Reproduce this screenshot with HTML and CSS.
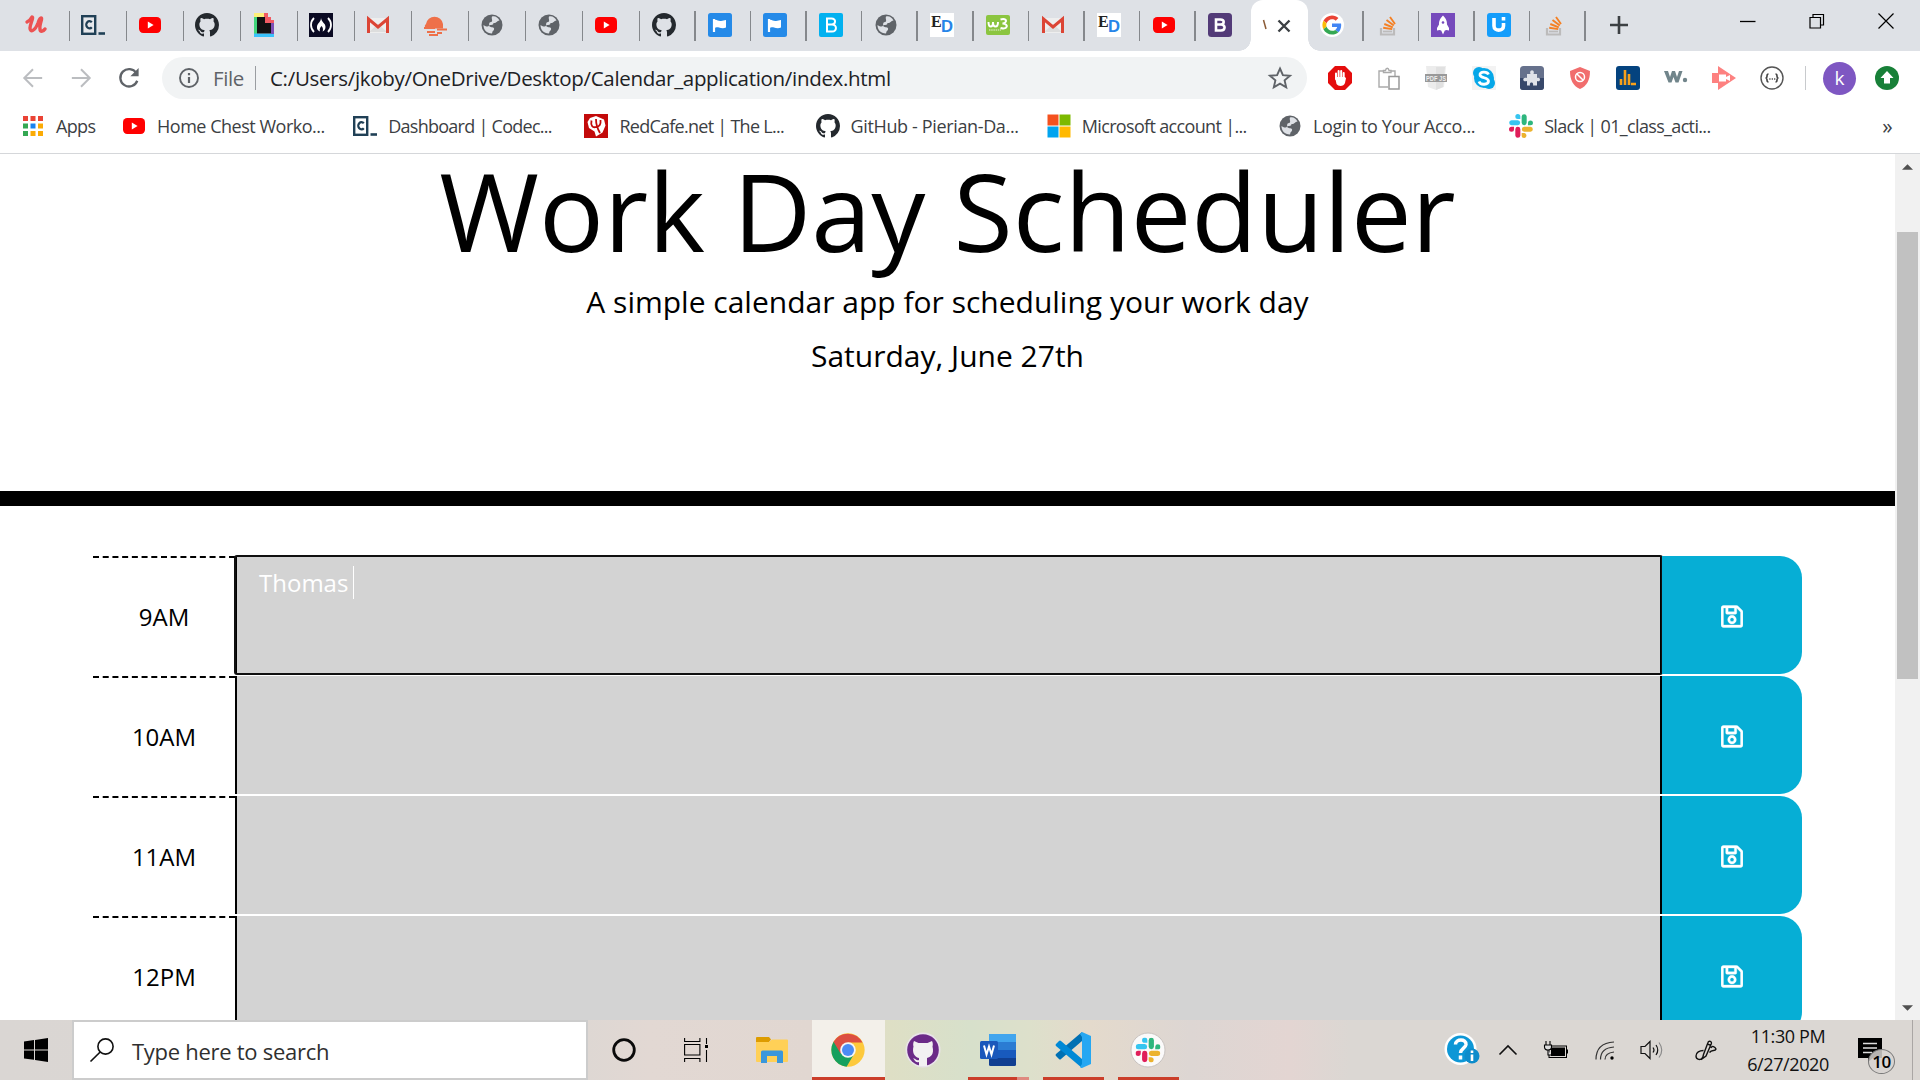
FILE: index.html
```html
<!DOCTYPE html>
<html lang="en">
<head>
<meta charset="utf-8">
<title>Work Day Scheduler</title>
<link rel="stylesheet" href="styles.css">
</head>
<body>
<svg class="defs" width="0" height="0">
  <symbol id="udemy" viewBox="0 0 24 24"><path d="M3 9c2-1 4-3 5-5 2 0-2 7-2 11 0 5 5 3 8-5 1-3 2-5 3-5 2 0-2 7-1 11 0 3 3 3 5 0" fill="none" stroke="#ec5252" stroke-width="3.4" stroke-linecap="round" stroke-linejoin="round"/></symbol>
  <symbol id="codec" viewBox="0 0 24 24"><rect x="1.2" y="3.2" width="13" height="17.6" fill="#fff" fill-opacity=".25" stroke="#204056" stroke-width="2.4"/><path d="M10.800 9.300A3.200 3.600 0 1 0 10.800 14.200" fill="none" stroke="#204056" stroke-width="2.200"/><path d="M17.500 20.500h6.500" stroke="#204056" stroke-width="2.600"/></symbol>
  <symbol id="yt" viewBox="0 0 24 24"><rect x="1" y="4" width="22" height="16" rx="4.200" fill="#f00"/><path d="M9.800 8.600v6.800l5.800-3.400z" fill="#fff"/></symbol>
  <symbol id="github" viewBox="0 0 16 16"><path fill="#24292e" d="M8 0C3.58 0 0 3.58 0 8c0 3.540 2.290 6.530 5.470 7.590.4.070.55-.17.55-.38 0-.19-.01-.82-.01-1.490-2.010.37-2.530-.49-2.690-.94-.09-.23-.48-.94-.82-1.130-.28-.15-.68-.52-.01-.53.63-.01 1.080.58 1.230.82.72 1.210 1.870.87 2.330.66.070-.52.28-.87.51-1.070-1.780-.2-3.640-.89-3.640-3.950 0-.87.31-1.590.82-2.150-.08-.2-.36-1.020.08-2.120 0 0 .67-.21 2.200.82.64-.18 1.320-.27 2-.27s1.360.09 2 .27c1.530-1.040 2.200-.82 2.200-.82.44 1.100.16 1.920.08 2.120.51.56.82 1.270.82 2.150 0 3.070-1.870 3.750-3.650 3.950.29.25.54.73.54 1.480 0 1.070-.01 1.930-.01 2.200 0 .21.15.46.55.38A8.013 8.013 0 0 0 16 8c0-4.420-3.580-8-8-8z"/></symbol>
  <symbol id="giphy" viewBox="0 0 24 24"><path d="M2 0h10v4H2z" fill="#fff07a"/><path d="M2 4h3v18H2z" fill="#42d67b"/><path d="M2 20.500h20V24H2z" fill="#39c2fb"/><path d="M19 9h3v12h-3z" fill="#7e4fb5"/><path d="M12 0h4v4h3v3h3v3H12z" fill="#f15b63"/><path d="M5 4h8v6h6v10.500H5z" fill="#111"/></symbol>
  <symbol id="fcc" viewBox="0 0 24 24"><path d="M0 0h24v24H0z" fill="#0a0a23"/><path d="M5 5c-4 4-4 10 0 14M19 5c4 4 4 10 0 14" stroke="#fff" stroke-width="1.800" fill="none"/><path d="M12 5c1 5 4.500 5 4.500 9 0 2.500-1.500 4-3 4.500 1-1.500.5-4-1-5.500-1 1-2.500 3-1.500 5.500-2-.5-3.500-2.500-3-5C8.500 10 12 9 12 5z" fill="#fff"/></symbol>
  <symbol id="gmail" viewBox="0 0 24 24"><path d="M2 5h20v15H2z" fill="#eee"/><path d="M3 19l9-8 9 8z" fill="#ddd"/><path d="M2.500 20V6l9.500 8 9.500-8v14" fill="none" stroke="#dc4535" stroke-width="3"/></symbol>
  <symbol id="sun" viewBox="0 0 24 24"><path d="M3 15.500C1 13 2 12 3 11a8.600 8.600 0 0 1 17 0v4.500z" fill="#ee7049"/><path d="M1 15h11M14 16.500h10M4 19h8M14 20h5M6 22h9" stroke="#ee7049" stroke-width="1.800"/></symbol>
  <symbol id="globe" viewBox="0 0 24 24"><circle cx="12" cy="12" r="10.500" fill="#5f6368"/><path d="M12 3.500c3-1 6 1 7.500 4-3 .5-3 3-6 2.500 0 2-2 2-4 2-1 2 1.500 2 3.500 2.500s1 3-.5 4l-.5 2c-5.500 0-8.500-4-8.500-8.500 3 2 5 2 5.500.5s-.5-3 2-3.500 0-3.500 1-5.500z" fill="#dee1e6"/></symbol>
  <symbol id="flag" viewBox="0 0 24 24"><rect width="24" height="24" rx="2.500" fill="#258ae8"/><path d="M6 6v13" stroke="#fff" stroke-width="2.200"/><path d="M6 7c3-1 4 1.500 7 1 2 0 3-1 5-1v7.500c-3 1.500-5 .5-7 0-2-.5-3 0-5 .5z" fill="#fff"/></symbol>
  <symbol id="bsb" viewBox="0 0 24 24"><rect width="24" height="24" rx="2" fill="#02b1f0"/><path d="M8 5.500h4.500c5 0 4.500 6 0 6H8h5c5.500 0 5 7 0 7H8z" fill="none" stroke="#fff" stroke-width="2"/></symbol>
  <symbol id="ed" viewBox="0 0 24 24"><path d="M0 0h24v24H0z" fill="#fff"/><text x="1" y="14" font-family="Liberation Serif,serif" font-weight="700" font-size="16" fill="#222">E</text><text x="11" y="19" font-family="Liberation Sans,sans-serif" font-weight="700" font-size="16" fill="#2684e8" textLength="12" lengthAdjust="spacingAndGlyphs">D</text></symbol>
  <symbol id="w3" viewBox="0 0 24 24"><rect y="2" width="24" height="20" rx="2" fill="#8bc540"/><path d="M2.500 9c0 6 4.500 6 4.500 0 0 6 5 6 5 0M14.500 6.500c7-2 7 3.500 2 4 7 .5 5 6.500-2 4.500" fill="none" stroke="#fff" stroke-width="2"/><path d="M3 17h12" stroke="#fff" stroke-dasharray="1.500 .7" opacity=".8"/></symbol>
  <symbol id="bs" viewBox="0 0 24 24"><rect width="24" height="24" rx="3.500" fill="#533b78"/><path d="M8 6.500h4.500c4.500 0 4 5 0 5H8h5c5 0 4.500 6 0 6H8z" fill="none" stroke="#fff" stroke-width="2.600"/></symbol>
  <symbol id="google" viewBox="-6 -6 60 60"><circle cx="24" cy="24" r="30" fill="#fff"/><path fill="#ea4335" d="M24 9.500c3.540 0 6.710 1.220 9.210 3.600l6.850-6.850C35.900 2.380 30.470 0 24 0 14.620 0 6.510 5.380 2.560 13.220l7.980 6.190C12.430 13.720 17.740 9.500 24 9.500z"/><path fill="#4285f4" d="M46.980 24.550c0-1.570-.15-3.090-.38-4.550H24v9.020h12.940c-.58 2.960-2.260 5.480-4.780 7.180l7.730 6c4.510-4.180 7.090-10.360 7.090-17.650z"/><path fill="#fbbc05" d="M10.530 28.590c-.48-1.450-.76-2.990-.76-4.590s.27-3.140.76-4.590l-7.980-6.190C.92 16.460 0 20.120 0 24c0 3.880.92 7.540 2.560 10.780l7.970-6.190z"/><path fill="#34a853" d="M24 48c6.480 0 11.930-2.130 15.890-5.810l-7.730-6c-2.150 1.450-4.920 2.300-8.160 2.300-6.260 0-11.570-4.220-13.470-9.910l-7.980 6.190C6.510 42.620 14.620 48 24 48z"/></symbol>
  <symbol id="so" viewBox="0 0 24 24"><path d="M5 15v6.500h13V15" fill="none" stroke="#bcbbbb" stroke-width="2.200"/><path d="M7 18.500h9" stroke="#bcbbbb" stroke-width="1.700"/><path d="M7.200 14.800l9 1.300M8.300 11l8.500 3.400M10.500 7l7.300 5.400M14 4l5 7" stroke="#f48024" stroke-width="1.900"/></symbol>
  <symbol id="rocket" viewBox="0 0 24 24"><path d="M0 0h24v24H0z" fill="#764abc"/><path d="M12 2.500c4 4 4 7 4 9l2 3.500v2.500q-3-1-4 0h-4q-1-1-4 0V15l2-3.500c0-2 0-5 4-9zM10.200 17.500h3.600L12 21.500z" fill="#fff"/><circle cx="12" cy="9.500" r="1.300" fill="#764abc"/></symbol>
  <symbol id="ui" viewBox="0 0 24 24"><rect width="24" height="24" rx="3" fill="#149dfb"/><path d="M7 5v8c0 5.500 9.500 5.500 9.500 0v-3" fill="none" stroke="#fff" stroke-width="3.600"/><path d="M14.700 4h3.600v3.500h-3.600z" fill="#fff"/></symbol>
  <symbol id="slack" viewBox="0 0 24 24"><path fill="#e01e5a" d="M5.042 15.165a2.528 2.528 0 0 1-2.520 2.523A2.528 2.528 0 0 1 0 15.165a2.527 2.527 0 0 1 2.522-2.520h2.520zM6.313 15.165a2.527 2.527 0 0 1 5.042 0v6.313a2.528 2.528 0 0 1-5.042 0z"/><path fill="#36c5f0" d="M8.834 5.042a2.528 2.528 0 0 1-2.521-2.520A2.528 2.528 0 0 1 8.834 0a2.528 2.528 0 0 1 2.521 2.522v2.520zM8.834 6.313a2.528 2.528 0 0 1 0 5.042H2.522a2.528 2.528 0 0 1 0-5.042z"/><path fill="#2eb67d" d="M18.956 8.834a2.528 2.528 0 0 1 5.044 0 2.528 2.528 0 0 1-2.522 2.521h-2.522zM17.688 8.834a2.528 2.528 0 0 1-5.043 0V2.522a2.528 2.528 0 0 1 5.043 0z"/><path fill="#ecb22e" d="M15.165 18.956a2.528 2.528 0 0 1 0 5.044 2.527 2.527 0 0 1-2.520-2.522v-2.522zM15.165 17.688a2.527 2.527 0 0 1 0-5.043h6.313a2.528 2.528 0 0 1 0 5.043z"/></symbol>
  <symbol id="save" viewBox="0 0 448 512"><path fill="#fff" stroke="#fff" stroke-width="8" d="M433.941 129.941l-83.882-83.882A48 48 0 0 0 316.118 32H48C21.490 32 0 53.490 0 80v352c0 26.510 21.490 48 48 48h352c26.510 0 48-21.490 48-48V163.882a48 48 0 0 0-14.059-33.941zM272 80v80H144V80h128zm122 352H54a6 6 0 0 1-6-6V86a6 6 0 0 1 6-6h42v104c0 13.255 10.745 24 24 24h176c13.255 0 24-10.745 24-24V83.882l78.243 78.243a6 6 0 0 1 1.757 4.243V426a6 6 0 0 1-6 6zM224 232c-48.523 0-88 39.477-88 88s39.477 88 88 88 88-39.477 88-88-39.477-88-88-88zm0 128c-22.056 0-40-17.944-40-40s17.944-40 40-40 40 17.944 40 40-17.944 40-40 40z"/></symbol>
</svg>

<div class="tabs">
  <div class="tab wide"><svg><use href="#udemy"/></svg></div>
  <div class="tab wide"><svg><use href="#codec"/></svg></div>
  <div class="tab wide"><svg><use href="#yt"/></svg></div>
  <div class="tab wide"><svg><use href="#github"/></svg></div>
  <div class="tab wide"><svg><use href="#giphy"/></svg></div>
  <div class="tab wide"><svg><use href="#fcc"/></svg></div>
  <div class="tab wide"><svg><use href="#gmail"/></svg></div>
  <div class="tab wide"><svg><use href="#sun"/></svg></div>
  <div class="tab wide"><svg><use href="#globe"/></svg></div>
  <div class="tab wide"><svg><use href="#globe"/></svg></div>
  <div class="tab wide"><svg><use href="#yt"/></svg></div>
  <div class="tab"><svg><use href="#github"/></svg></div>
  <div class="tab"><svg><use href="#flag"/></svg></div>
  <div class="tab"><svg><use href="#flag"/></svg></div>
  <div class="tab"><svg><use href="#bsb"/></svg></div>
  <div class="tab"><svg><use href="#globe"/></svg></div>
  <div class="tab"><svg><use href="#ed"/></svg></div>
  <div class="tab"><svg><use href="#w3"/></svg></div>
  <div class="tab"><svg><use href="#gmail"/></svg></div>
  <div class="tab"><svg><use href="#ed"/></svg></div>
  <div class="tab"><svg><use href="#yt"/></svg></div>
  <div class="tab last"><svg><use href="#bs"/></svg></div>
  <div class="tab active"><svg class="sliver" viewBox="0 0 4 14"><path d="M.5 1l2.500 9" stroke="#8a5a35" stroke-width="1.500"/></svg><svg class="close" viewBox="0 0 14 14"><path d="M1.500 1.500l11 11m0-11l-11 11" stroke="#3c4043" stroke-width="2.400"/></svg></div>
  <div class="tab"><svg><use href="#google"/></svg></div>
  <div class="tab"><svg><use href="#so"/></svg></div>
  <div class="tab"><svg><use href="#rocket"/></svg></div>
  <div class="tab"><svg><use href="#ui"/></svg></div>
  <div class="tab"><svg><use href="#so"/></svg></div>
  <svg class="newtab" viewBox="0 0 18 18"><path d="M9 0v18M0 9h18" stroke="#3c4043" stroke-width="2.600"/></svg>
  <div class="window">
    <svg viewBox="0 0 16 16"><path d="M0 8.500h15.500" stroke="#000" stroke-width="1.300"/></svg>
    <svg viewBox="0 0 16 16"><path d="M1 4.500h10.500V15H1zM4 4.500v-3h10.500V12h-3" fill="none" stroke="#000" stroke-width="1.200"/></svg>
    <svg viewBox="0 0 16 16"><path d="M.5.5l15 15m0-15l-15 15" stroke="#000" stroke-width="1.200"/></svg>
  </div>
</div>

<div class="toolbar">
  <div class="nav">
    <svg viewBox="0 0 24 24"><path d="M22 12H3m9-9.500L2.500 12l9.500 9.500" fill="none" stroke="#bbbdc0" stroke-width="2.200"/></svg>
    <svg viewBox="0 0 24 24"><path d="M2 12h19m-9-9.500l9.500 9.500-9.500 9.500" fill="none" stroke="#bbbdc0" stroke-width="2.200"/></svg>
    <svg viewBox="0 0 24 24"><path d="M20 6.500A9.500 9.500 0 1 0 21 15" fill="none" stroke="#5f6368" stroke-width="2.500"/><path d="M22.500 1v9h-9z" fill="#5f6368"/></svg>
  </div>
  <div class="omnibox">
    <svg class="info" viewBox="0 0 20 20"><circle cx="10" cy="10" r="9" fill="none" stroke="#5f6368" stroke-width="1.900"/><path d="M10 9v6M10 5v2.200" stroke="#5f6368" stroke-width="2.200"/></svg>
    <span class="scheme">File</span>
    <span class="url">C:/Users/jkoby/OneDrive/Desktop/Calendar_application/index.html</span>
    <svg class="star" viewBox="0 0 24 24"><path d="M12 2.500l2.900 6.600 7.100.6-5.400 4.700 1.600 7-6.200-3.700-6.200 3.700 1.600-7L2 9.700l7.100-.6z" fill="none" stroke="#5f6368" stroke-width="1.900"/></svg>
  </div>
  <div class="ext">
    <svg viewBox="0 0 24 24"><path d="M7 0h10l7 7v10l-7 7H7l-7-7V7z" fill="#e40d0d"/><path d="M8 13V7.500M10.600 12V5M13.200 12V5M15.700 13V7" stroke="#fff" stroke-width="2" stroke-linecap="round"/><path d="M7 11h9.700l1.300 1-1 5c-1 3.500-6.500 4-8.500 1z" fill="#fff"/></svg>
    <svg viewBox="0 0 24 24"><path d="M12 21H3V5h4.500M15 5h4v5M7.500 6.500h7.500V4.500h-2c-.5-3-3-3-3.500 0h-2z" fill="none" stroke="#aaa" stroke-width="1.400"/><path d="M13 10.500h10V23H13z" fill="#fff" stroke="#999" stroke-width="1.500"/></svg>
    <svg viewBox="0 0 24 24"><path d="M2 0h20l-2 21-8 3-8-3z" fill="#ececec"/><path d="M12 1h9l-2 20-7 3z" fill="#e1e1e1"/><rect x="1" y="8" width="22" height="8" fill="#999"/><text x="2" y="15" font-family="Liberation Sans,sans-serif" font-size="7.500" font-weight="700" fill="#eee" textLength="20" lengthAdjust="spacingAndGlyphs">PDF JS</text></svg>
    <svg viewBox="0 0 24 24"><path d="M0 0h24v24H0z" fill="#f3f3f3"/><circle cx="12" cy="12" r="10" fill="#06a7e8"/><circle cx="7" cy="7" r="6" fill="#06a7e8"/><circle cx="17" cy="17" r="6" fill="#06a7e8"/><path d="M16.500 8.500C15 5 7.500 5.500 8 9c.5 3.500 8.500 2 8.500 6s-8 4.500-9.500.5" fill="none" stroke="#fff" stroke-width="2.800"/></svg>
    <svg viewBox="0 0 24 24"><rect width="24" height="24" rx="3.500" fill="#66718c"/><path d="M0 12h24v9a3 3 0 0 1-3 3H3a3 3 0 0 1-3-3z" fill="#38486a"/><path d="M7 8h3.500c-2-5 5-5 3 0H17v4c4-2 4 5 0 3v4.500h-4c1-4-4-4-3 0H7V15c-5 2-5-5 0-3z" fill="#e0e2e8"/></svg>
    <svg viewBox="0 0 24 24"><path d="M12 1l10 4c0 9-3 15-10 18C5 20 2 14 2 5z" fill="#f16d6d"/><circle cx="12" cy="11" r="4.500" fill="none" stroke="#fff" stroke-width="1.500"/><path d="M9 8l6 6" stroke="#fff" stroke-width="1.500"/></svg>
    <svg viewBox="0 0 24 24"><rect width="24" height="24" rx="3" fill="#04437f"/><path d="M5 19v-6M9 19V4M13 19V8M15 18h5" stroke="#f9a11b" stroke-width="2.600"/></svg>
    <svg viewBox="0 0 24 24"><path d="M0 5h4l2 6 2-6h3l2 6 2-6h3.500l-4 11.500h-3L9.500 11l-2 5.500h-3z" fill="#71858b"/><circle cx="21" cy="14" r="2.200" fill="#71858b"/></svg>
    <svg viewBox="0 0 24 24"><path d="M0 7h6v10H0zM6 0l18 12L6 24z" fill="#fd8180"/><path d="M7 8.500h7V11l4-2v6l-4-2v2.500H7z" fill="#fff"/></svg>
    <svg viewBox="0 0 24 24"><circle cx="12" cy="12" r="11" fill="none" stroke="#555" stroke-width="1.400"/><path d="M8.500 8c-3 0 0 4-3 4 3 0 0 4 3 4M15.500 8c3 0 0 4 3 4-3 0 0 4-3 4" fill="none" stroke="#444" stroke-width="1.600"/><path d="M9.300 13h6" stroke="#444" stroke-width="1.300" stroke-dasharray="1.200 1.200"/></svg>
  </div>
  <div class="avatar">k</div>
  <svg class="update" viewBox="0 0 24 24"><circle cx="12" cy="12" r="12" fill="#188038"/><path d="M12 5l6.500 7H15v5.500H9V12H5.500z" fill="#fff"/></svg>
</div>

<div class="bookmarks">
  <div class="bm apps"><svg viewBox="0 0 20 20"><path d="M0 0h5v5H0zM7.500 0h5v5h-5zM15 0h5v5h-5z" fill="#ea4335"/><path d="M0 7.500h5v5H0zM0 15h5v5H0z" fill="#34a853"/><path d="M7.500 7.500h5v5h-5z" fill="#1a82f0"/><path d="M15 7.500h5v5h-5zM15 15h5v5h-5zM7.500 15h5v5h-5z" fill="#fbab05"/></svg><span>Apps</span></div>
  <div class="bm"><svg><use href="#yt"/></svg><span class="mid">Home Chest Worko...</span></div>
  <div class="bm"><svg><use href="#codec"/></svg><span class="tight">Dashboard | Codec...</span></div>
  <div class="bm"><svg viewBox="0 0 24 24"><path d="M0 0h24v24H0z" fill="#c30a0a"/><path d="M12 2l8 3.500 1.500 6-3 7-6.500 4-1.500-5L5 14 3.500 8 6 4z" fill="#fff"/><path d="M7.500 6.500c-1 5 1 7.500 4.500 6.500 3.500 0 5-3 4.500-7M12 5c0 6 1 9 4 14" fill="none" stroke="#c30a0a" stroke-width="1.800"/></svg><span class="tight">RedCafe.net | The L...</span></div>
  <div class="bm"><svg><use href="#github"/></svg><span class="loose">GitHub - Pierian-Da...</span></div>
  <div class="bm"><svg viewBox="0 0 24 24"><path d="M.5.5h11v11H.5z" fill="#f4511e"/><path d="M12.500.5h11v11h-11z" fill="#7cb900"/><path d="M.5 12.500h11v11H.5z" fill="#01a4ef"/><path d="M12.500 12.500h11v11h-11z" fill="#ffb900"/></svg><span>Microsoft account |...</span></div>
  <div class="bm"><svg><use href="#globe"/></svg><span class="loose">Login to Your Acco...</span></div>
  <div class="bm"><svg><use href="#slack"/></svg><span>Slack | 01_class_acti...</span></div>
  <span class="more">»</span>
</div>

<div class="viewport">
  <main class="page">
    <header class="jumbotron">
      <h1>Work Day Scheduler</h1>
      <p>A simple calendar app for scheduling your work day</p>
      <p>Saturday, June 27th</p>
    </header>
    <div class="schedule">
      <div class="row"><div class="hour">9AM</div><div class="entry focused">Thomas<i class="caret"></i></div><div class="save"><svg><use href="#save"/></svg></div></div>
      <div class="row"><div class="hour">10AM</div><div class="entry"></div><div class="save"><svg><use href="#save"/></svg></div></div>
      <div class="row"><div class="hour">11AM</div><div class="entry"></div><div class="save"><svg><use href="#save"/></svg></div></div>
      <div class="row"><div class="hour">12PM</div><div class="entry"></div><div class="save"><svg><use href="#save"/></svg></div></div>
    </div>
  </main>
  <div class="scrollbar">
    <svg viewBox="0 0 12 6"><path d="M0 6l6-6 6 6z" fill="#505050"/></svg>
    <div class="thumb"></div>
    <svg class="down" viewBox="0 0 12 6"><path d="M0 0l6 6 6-6z" fill="#505050"/></svg>
  </div>
</div>

<div class="taskbar">
  <div class="start"><svg viewBox="0 0 24 24"><path d="M0 3.500l10-1.400v9.300H0zM11 2l13-2v11.400H11zM0 12.400h10v9.300L0 20.500zM11 12.400h13V24l-13-2z"/></svg></div>
  <div class="search"><svg viewBox="0 0 24 24"><circle cx="15.500" cy="8.500" r="7.600" fill="none" stroke="#111" stroke-width="1.600"/><path d="M10.200 14L.5 23.500" stroke="#111" stroke-width="1.700"/></svg><span>Type here to search</span></div>
  <div class="app c72"><svg viewBox="0 0 24 24" width="24"><circle cx="12" cy="12" r="10.300" fill="none" stroke="#0a0a0a" stroke-width="2.800"/></svg></div>
  <div class="app c72"><svg viewBox="0 0 24 24" width="24"><path d="M.6 0v3.500h15.300V0M.6 24v-3.500h15.300V24M.6 6.500h15.300v10.500H.6zM22.500 0v6M22.500 12v12" fill="none" stroke="#000" stroke-width="1.100"/><path d="M21 7h3v3h-3z"/></svg></div>
  <div class="app files"><svg viewBox="0 0 32 32" width="32"><path d="M0 4q0-1 1-1h12l2 2.500-2 2.500H0z" fill="#dd9c00"/><path d="M0 8h13l3-2.500h15q1 0 1 1V27q0 1-1 1H1q-1 0-1-1z" fill="#ffd057"/><path d="M5 29V18q0-1.500 1.500-1.500h19q1.500 0 1.500 1.500v11h-6v-7H11v7z" fill="#3a97dc"/></svg></div>
  <div class="app chrome"><svg viewBox="0 0 48 48" width="34"><circle cx="24" cy="24" r="23.500" fill="#fdc93c"/><path d="M24 24L3.600 12.300A23.500 23.500 0 0 0 22 47.500L33 29z" fill="#16a05d"/><path d="M24 24L13.500 29 3.600 12.300A23.500 23.500 0 0 1 44.500 13.500H24z" fill="#dc4e41"/><circle cx="24" cy="24" r="11" fill="#f5f5f5"/><circle cx="24" cy="24" r="8.500" fill="#4b8bf4"/></svg></div>
  <div class="app"><svg viewBox="0 0 36 36" width="36"><circle cx="18" cy="18" r="17.500" fill="#e9e3ea"/><circle cx="18" cy="18" r="15.800" fill="#6b2a88"/><path d="M9 9l4.500 2h9L27 9c1 2 1 4 .5 5.500 2 8-2 10.500-5.500 11.500V34h-8v-4c-4 1-4-2-6-3.500 3-.5 3 2.500 6 1.500V26c-5-1-7-6-5.500-11.500C8 13 8 11 9 9z" fill="#f2f0f2"/></svg></div>
  <div class="app running word"><svg viewBox="0 0 36 36" width="36"><path d="M9 2h27v8H9z" fill="#41a5ee"/><path d="M9 10h27v8H9z" fill="#2b7cd3"/><path d="M9 18h27v8H9z" fill="#185abd"/><path d="M9 26h27v6.500q0 1.500-1.500 1.500h-24Q9 34 9 32.500z" fill="#103f91"/><rect y="9" width="18" height="18" rx="1.500" fill="#1a58bb"/><path d="M4 13.500l2.500 9 2.500-8 2.500 8 2.500-9" fill="none" stroke="#fff" stroke-width="2"/></svg></div>
  <div class="app running"><svg viewBox="0 0 36 36" width="36"><path d="M27 0v9L6 27q-1 1-2 0l-3-3q-1-1 0-2z" fill="#0070b3"/><path d="M27 36v-9L6 9Q5 8 4 9l-3 3q-1 1 0 2z" fill="#0089d6"/><path d="M27 0l9 4v28l-9 4q-1.500 0-2-1l2-3V5l-2-3z" fill="#26a7f2"/></svg></div>
  <div class="app running"><svg viewBox="0 0 36 36" width="36"><circle cx="18" cy="18" r="17" fill="#fbfafa" stroke="#c9c3c0"/><use href="#slack" x="5.500" y="5.500" width="25" height="25"/></svg></div>
  <div class="tray">
    <div class="cell help"><svg viewBox="0 0 36 36" width="36"><circle cx="16.500" cy="17" r="16" fill="#fff"/><circle cx="16.500" cy="17" r="13.500" fill="#0d97d6"/><path d="M11.500 12.500c0-6 11-6 10.500 0-.5 4-5.500 4-5.500 8.500M16.500 23.500v4" fill="none" stroke="#fff" stroke-width="3.500"/><circle cx="28" cy="24" r="7.500" fill="#0d8ccb"/><path d="M28 22.500v6.500M28 18.500v2.500" stroke="#fff" stroke-width="2.600"/></svg></div>
    <div class="cell"><svg viewBox="0 0 18 10" width="18"><path d="M.5 9.500L9 1l8.500 8.500" fill="none" stroke="#111" stroke-width="1.600"/></svg></div>
    <div class="cell"><svg viewBox="0 0 24 18" width="24"><rect x="5" y="5" width="17.500" height="11.500" fill="none" stroke="#000"/><path d="M7 6.500h14v8.500H7zM22.500 8.500H24v4h-1.500z"/><path d="M2 0v4M6 0v4M.5 4h7v2q0 3-3.500 3-3.500 0-3.500-3zM4 9v5h3" fill="#ddd" stroke="#000" stroke-width="1.100"/></svg></div>
    <div class="cell wifi"><svg viewBox="0 0 20 20" width="20"><path d="M1 19.500Q1 3 19 2M5.500 19.500Q5.500 8 19 7M10 19.500Q10 13 19 12" fill="none" stroke="#333" stroke-width="1.200"/><circle cx="17" cy="18" r="1.700"/></svg></div>
    <div class="cell"><svg viewBox="0 0 24 20" width="24"><path d="M1 6.500h4l5-5v17l-5-5H1zM13 7.500q2 2.500 0 5M16 5q3.500 5 0 10" fill="none" stroke="#111" stroke-width="1.200"/><path d="M19 2.500q5.500 7.500 0 15" fill="none" stroke="#888" stroke-width="1.100"/></svg></div>
    <div class="cell pen"><svg viewBox="0 0 22 22" width="22"><path d="M7.500 19.500l1-4L13 3.500c.8-2.300 4.200-1 3.300 1.300L11 17zM12.500 5l3.300 1.300M8.500 11.500c-4 0-7.500 2-7.500 5.500 0 4 5 4.500 6.500 1.500M16 9c1-3 4-1 5 1-1 3-4 0-6.500 3.500" fill="none" stroke="#111" stroke-width="1.400"/></svg></div>
    <div class="clock"><span>11:30 PM</span><span>6/27/2020</span></div>
    <div class="cell notif"><svg viewBox="0 0 24 24" width="24"><path d="M0 0h24v20h-9l-5 4v-4H0z"/><path d="M5 5.500h14M5 10h14M5 14.500h9" stroke="#ddd" stroke-width="1.300"/></svg><b>10</b></div>
  </div>
</div>
</body>
</html>
```
FILE: styles.css
```css
* { box-sizing: border-box; }
body {
  margin: 0;
  width: 1920px;
  height: 1080px;
  overflow: hidden;
  display: flex;
  flex-direction: column;
  font-family: "Open Sans", "Noto Sans", sans-serif;
  background: #fff;
  color: #000;
}
svg { display: block; flex: none; overflow: visible; }
.defs { position: absolute; }

/* Tab strip */
.tabs { flex: none; height: 51px; background: #dee1e6; display: flex; padding-left: 13px; }
.tab { position: relative; flex: none; width: 55.6px; height: 51px; padding: 13px 0 0 12px; }
.tab.wide { width: 57px; padding-left: 11px; }
.tab svg { width: 24px; height: 24px; }
.tab::after { content: ""; position: absolute; right: 0; top: 11px; width: 1.500px; height: 30px; background: #85888c; }
.tab.last { width: 55px; }
.tab.last::after { display: none; }
.tab.active { width: 57px; background: #fff; border-radius: 12px 12px 0 0; display: flex; padding: 0; align-items: center; }
.tab.active::before, .tab.active::after {
  content: ""; position: absolute; top: auto; bottom: 0; width: 12px; height: 12px; background: none;
}
.tab.active::before { left: -12px; background: radial-gradient(circle at 0 0, transparent 11.500px, #fff 12px); }
.tab.active::after { right: -12px; background: radial-gradient(circle at 100% 0, transparent 11.500px, #fff 12px); }
.tab .sliver { width: 4px; height: 14px; margin-left: 12px; }
.tab .close { width: 14px; height: 14px; margin-left: 10px; }
.newtab { width: 18px; height: 18px; margin: 16px 0 0 24px; }
.window { margin-left: auto; padding: 13px 26px 0 0; display: flex; gap: 53px; }
.window svg { width: 16px; height: 16px; }

/* Toolbar */
.toolbar { flex: none; height: 54px; display: flex; align-items: center; }
.nav { width: 162px; display: flex; gap: 26px; padding-left: 22px; }
.nav svg { width: 22px; height: 24px; }
.omnibox {
  width: 1145px; height: 42px; border-radius: 21px; background: #f1f3f4;
  display: flex; align-items: center; font-size: 20.500px; padding: 0 15px 0 17px;
}
.info { width: 20px; height: 20px; }
.scheme { width: 43px; margin-left: 14px; color: #5f6368; letter-spacing: -.4px; border-right: 1.500px solid #9a9da1; line-height: 24px; }
.url { margin-left: 14px; color: #202124; letter-spacing: -.31px; }
.star { width: 24px; height: 24px; margin-left: auto; }
.ext { margin-left: 21px; display: flex; gap: 24px; padding-right: 21px; border-right: 1px solid #c8cacd; }
.ext svg { width: 24px; height: 24px; }
.avatar {
  width: 33px; height: 33px; margin-left: 17px; border-radius: 50%; background: #7e57c2;
  color: #fff; font-size: 19px; display: flex; align-items: center; justify-content: center;
}
.update { width: 24px; height: 24px; margin-left: 19px; }

/* Bookmarks bar */
.bookmarks {
  flex: none; height: 49px; padding: 0 28px 7px 23px; display: flex; align-items: center;
  border-bottom: 1px solid #d5d7da; font-size: 18px; letter-spacing: -.66px; color: #3c4043; white-space: nowrap;
}
.bm { width: 231.200px; display: flex; align-items: center; gap: 12px; }
.bm svg { width: 24px; height: 24px; }
.bm.apps { width: 99px; gap: 14px; }
.bm.apps svg { width: 20px; height: 20px; }
.bm span { margin-left: -1px; }
.bm .tight { letter-spacing: -.73px; }
.bm .mid { letter-spacing: -.48px; }
.bm .loose { letter-spacing: -.36px; }
.more { margin-left: auto; font-size: 21px; }

/* Web page */
.viewport { flex: 1; min-height: 0; display: flex; overflow: hidden; }
.page { width: 1895px; overflow: hidden; }
.jumbotron { display: flow-root; height: 352px; border-bottom: 15px solid #000; text-align: center; }
h1 { margin: -8px 0 3px; font-size: 108px; font-weight: 400; line-height: 130px; }
.jumbotron p { margin: 0 0 9px; font-size: 30px; font-weight: 400; line-height: 45px; }
.schedule { padding: 50px 93px 0; display: grid; row-gap: 2px; }
.row { height: 118px; display: grid; grid-template-columns: 142px 1427px 140px; }
.hour {
  border-top: 2px dashed #000; display: flex; align-items: center; justify-content: center;
  font-size: 24px; font-weight: 400;
}
.entry {
  background: #d3d3d3; border: solid #000; border-width: 0 2px;
  color: #fff; font-size: 24px; line-height: 36px; padding: 9px 22px; display: flex;
}
.focused { outline: 2px solid #101010; outline-offset: -1px; border-radius: 2px; }
.caret { width: 1px; height: 33px; margin: 1px 0 0 5px; background: #fff; }
.save { background: #06aed5; border-radius: 0 22px 22px 0; display: flex; align-items: center; justify-content: center; padding-top: 2px; }
.save svg { width: 22px; height: 25px; }

.scrollbar { width: 25px; background: #f1f1f1; display: flex; flex-direction: column; align-items: center; padding: 10px 0 9px; }
.scrollbar svg { width: 11px; height: 6px; }
.thumb { width: 21px; height: 447px; margin-top: 62px; background: #c1c1c1; }
.scrollbar .down { margin-top: auto; }

/* Taskbar */
.taskbar {
  flex: none; height: 60px; display: flex;
  background: linear-gradient(90deg, #dad6d3 0, #dcd7d3 560px, #e2d8d3 650px, #e1d7d1 810px, #dedfc5 890px, #d7e0cb 970px, #dde0cb 1030px, #e4dacc 1090px, #ddd6d3 1190px, #e3d5d2 1290px, #dbd7d3 1350px, #dbd7d3 100%);
}
.start { width: 72px; padding: 18px 0 0 24px; }
.start svg { width: 24px; height: 24px; }
.search {
  width: 516px; border: 2px solid #ccc; background: #fff; display: flex; align-items: center; gap: 18px;
  padding-left: 16px; font-size: 22px; letter-spacing: -.28px; color: #2f2f2f;
}
.search svg { width: 24px; height: 24px; }
.search span { padding-top: 2px; }
.app { position: relative; width: 75px; display: flex; align-items: center; justify-content: center; }
.app.c72 { width: 72px; }
.app.files { width: 75px; margin: 0 2px 0 3px; padding-right: 2px; }
.app.chrome { width: 73px; background: #f3f0ea; border-bottom: 3px solid #cb3e2a; padding: 3px 1px 0 0; }
.running::after { content: ""; position: absolute; left: 8px; bottom: 0; width: 61px; height: 3px; background: #cb3e2a; }
.word::after { background: linear-gradient(90deg, #cb3e2a 49px, #df8a80 49px); }
.tray { margin-left: auto; display: flex; padding-right: 8px; position: relative; }
.tray::after { content: ""; position: absolute; right: 7px; top: 0; width: 1px; height: 60px; background: #aaa6a4; }
.cell { width: 48px; display: flex; align-items: center; justify-content: center; }
.help { padding-left: 3px; }
.wifi { padding-left: 2px; }
.pen { width: 54px; padding-left: 6px; }
.clock {
  width: 116px; display: flex; flex-direction: column; align-items: center; justify-content: center;
  font-size: 18px; line-height: 28px; letter-spacing: -.4px; color: #111;
}
.notif { position: relative; width: 66px; padding-right: 18px; }
.notif b {
  position: absolute; left: 22px; top: 29px; width: 27px; height: 25px; border: 1px solid #777; border-radius: 50%;
  background: rgba(215, 211, 208, .85); font-size: 17px; font-weight: 600; line-height: 23px; text-align: center; letter-spacing: -.5px;
}
```
